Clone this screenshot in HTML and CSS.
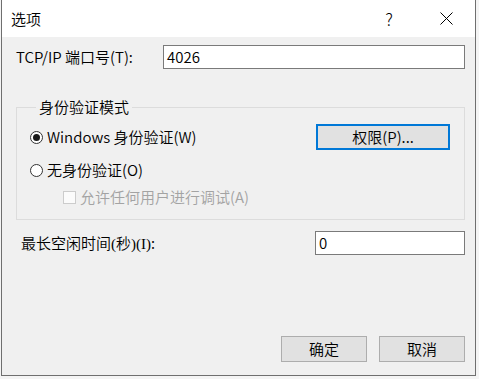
FILE: index.html
```html
<!DOCTYPE html>
<html lang="zh-CN">
<head>
<meta charset="utf-8">
<title>选项</title>
<link rel="stylesheet" href="styles.css">
</head>
<body>
<div class="window">
  <div class="titlebar">
    <span class="title">选项</span>
    <div class="controls">
      <span class="ctrl help">?</span>
      <span class="ctrl close">
        <svg width="13" height="13" viewBox="0 0 13 13"><path d="M0.5 0.5 L12.5 12.5 M12.5 0.5 L0.5 12.5" stroke="#000" stroke-width="1" fill="none"/></svg>
      </span>
    </div>
  </div>
  <div class="content">
    <div class="row port-row">
      <span class="label">TCP/IP 端口号(T):</span>
      <div class="input port-input">4026</div>
    </div>
    <fieldset class="group">
      <legend>身份验证模式</legend>
      <div class="group-row first">
        <span class="option"><span class="radio checked"></span>Windows 身份验证(W)</span>
        <span class="button perm">权限(P)...</span>
      </div>
      <div class="group-row second">
        <span class="option"><span class="radio"></span>无身份验证(O)</span>
      </div>
      <div class="group-row third">
        <span class="option disabled"><span class="check"></span>允许任何用户进行调试(A)</span>
      </div>
    </fieldset>
    <div class="row idle-row">
      <span class="label idle-label">最长空闲时间<span class="serif">(秒)(I)</span>:</span>
      <div class="input idle-input">0</div>
    </div>
    <div class="footer">
      <span class="button">确定</span>
      <span class="button">取消</span>
    </div>
  </div>
</div>
</body>
</html>
```

FILE: styles.css
```css
* { box-sizing: border-box; }
html, body {
  margin: 0;
  padding: 0;
  background: #f4f4f4;
}
body {
  width: 479px;
  height: 379px;
  overflow: hidden;
  font-family: "Noto Sans CJK SC", sans-serif;
  font-weight: 350;
  font-size: 15px;
  color: #000;
}
.window {
  margin-left: 1px;
  width: 475px;
  height: 376px;
  border: 1px solid #6f6f6f;
  border-top: 0;
  background: #f0f0f0;
  display: flex;
  flex-direction: column;
}
.titlebar {
  height: 37px;
  background: #fff;
  display: flex;
  align-items: center;
  padding-left: 9px;
}
.title {
  flex: 1;
  line-height: 20px;
}
.controls {
  display: flex;
  height: 37px;
}
.ctrl {
  width: 58px;
  height: 37px;
  display: flex;
  align-items: center;
  justify-content: center;
}
.help {
  font-weight: 300;
  font-size: 17px;
  padding-left: 2px;
}
.close svg { display: block; }
.content {
  flex: 1;
  display: flex;
  flex-direction: column;
  padding: 8px 10px 13px 14px;
}
.row {
  display: flex;
  align-items: center;
  justify-content: space-between;
  height: 24px;
}
.label { line-height: 20px; }
.idle-label { padding-left: 5px; }
.serif { font-family: "Liberation Serif", "Noto Sans CJK SC", serif; }
.input {
  height: 24px;
  background: #fff;
  border: 1px solid #7a7a7a;
  padding-left: 3px;
  line-height: 21px;
}
.port-input { width: 302px; }
.idle-input { width: 150px; }
.group {
  margin: 30px 0 0 0;
  padding: 0 14px 12px 13px;
  border: 1px solid #dcdcdc;
  min-width: 0;
}
.group legend {
  margin-left: 6px;
  padding: 0 3px;
  line-height: 16px;
}
.group-row {
  display: flex;
  align-items: center;
  justify-content: space-between;
  height: 20px;
}
.group-row.first { margin-top: 9px; height: 26px; }
.group-row.second { margin-top: 10px; }
.group-row.third { margin-top: 7px; padding-left: 33px; }
.option {
  display: flex;
  align-items: center;
  gap: 4px;
  line-height: 20px;
}
.option.disabled { color: #a3a3a3; }
.radio {
  width: 13px;
  height: 13px;
  border: 1px solid #333;
  border-radius: 50%;
  background: #fff;
  display: flex;
  align-items: center;
  justify-content: center;
}
.radio.checked::after {
  content: "";
  width: 7px;
  height: 7px;
  border-radius: 50%;
  background: #1a1a1a;
}
.check {
  width: 13px;
  height: 13px;
  border: 1px solid #cccccc;
  background: #fbfbfb;
}
.button {
  height: 26px;
  width: 86px;
  background: #e1e1e1;
  border: 1px solid #adadad;
  display: flex;
  align-items: center;
  justify-content: center;
  line-height: 20px;
}
.button.perm {
  width: 134px;
  border: 2px solid #0078d7;
}
.idle-row { margin-top: 11px; }
.footer {
  margin-top: auto;
  display: flex;
  justify-content: flex-end;
  gap: 12px;
}
```
